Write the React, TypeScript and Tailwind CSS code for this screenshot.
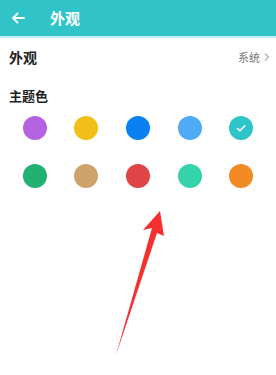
import React from "react";

const colors = [
  "#b463e0", "#f2be18", "#0a80f5", "#4faaf7", "#2ec4c8",
  "#23b073", "#d0a26b", "#e04446", "#34d3a9", "#f28b24",
];

export default function App() {
  return (
    <div
      className="relative w-[276px] h-[375px] bg-white overflow-hidden"
      style={{ fontFamily: '"Noto Sans CJK SC", "Noto Sans", sans-serif' }}
    >
      <div className="h-[38px] bg-[#30c4c9] flex items-center border-b-2 border-[#c8f0f0]">
        <svg width="14" height="14" viewBox="0 0 14 14" className="ml-[11px]">
          <path d="M13 7H2M6.5 2.5L2 7l4.5 4.5" stroke="white" strokeWidth="1.8" fill="none" strokeLinecap="round" strokeLinejoin="round" />
        </svg>
        <span className="ml-[25px] text-white text-[15px] font-bold">外观</span>
      </div>
      <div className="h-[38px] flex items-center justify-between pl-[9px] pr-[5px]">
        <span className="text-[14px] font-bold text-[#222]">外观</span>
        <span className="flex items-center text-[11px] text-[#777]">
          系统
          <svg width="8" height="10" viewBox="0 0 8 10" className="ml-[3px]">
            <path d="M2 1.5L5.5 5 2 8.5" stroke="#aaa" strokeWidth="1.1" fill="none" />
          </svg>
        </span>
      </div>
      <div className="pl-[9px] pt-[11px] text-[13px] font-bold text-[#222] leading-[18px]">主题色</div>
      <div className="grid grid-cols-5 px-[9px] pt-[11px] gap-y-[24px]">
        {colors.map((c, i) => (
          <div key={i} className="flex justify-center">
            <div
              className="w-[24px] h-[24px] rounded-full flex items-center justify-center"
              style={{ backgroundColor: c }}
            >
              {i === 4 && (
                <svg width="12" height="12" viewBox="0 0 12 12">
                  <path d="M2.5 6.5L5 8.8 9.8 3.8" stroke="white" strokeWidth="1.6" fill="none" strokeLinecap="round" strokeLinejoin="round" />
                </svg>
              )}
            </div>
          </div>
        ))}
      </div>
      <svg className="absolute left-0 top-0" width="276" height="375" viewBox="0 0 276 375">
        <polygon points="160,211 164,236 157,233 116,355 152,228 143,230" fill="#f5302f" />
      </svg>
    </div>
  );
}
